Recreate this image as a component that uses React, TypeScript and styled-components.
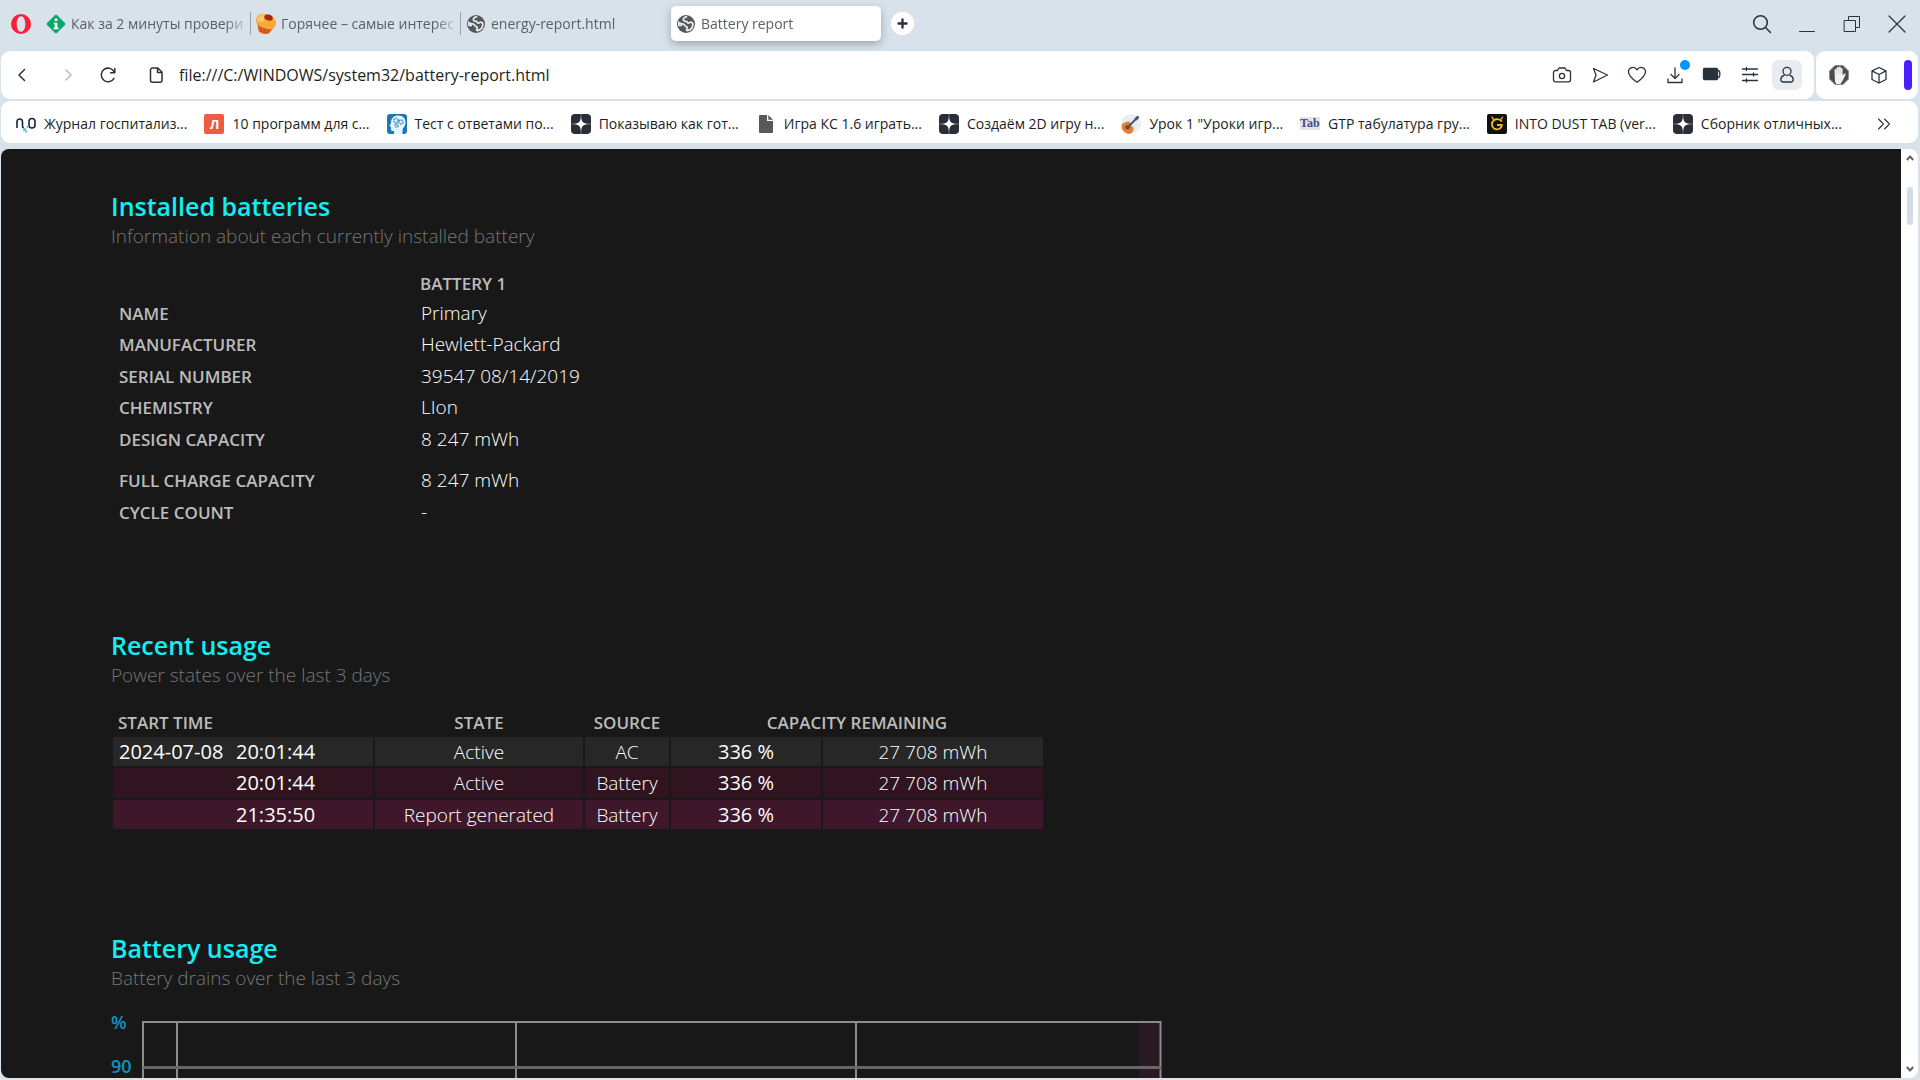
import React from "react";
import styled, { createGlobalStyle, css } from "styled-components";

const GlobalStyle = createGlobalStyle`
  * { box-sizing: border-box; }
  body {
    margin: 0;
    background: #d8e2ea;
    font-family: "Open Sans", "Noto Sans", sans-serif;
    overflow: hidden;
  }
  svg { display: block; flex: none; }
`;

const Window = styled.div`
  display: flex;
  flex-direction: column;
  height: 100vh;
  background: #d8e2ea;
`;

const TabBar = styled.header`
  display: flex;
  align-items: center;
  height: 51px;
  padding: 0 1px 4px 11px;
`;

const plainButton = css`
  border: 0;
  padding: 0;
  background: none;
  display: flex;
  align-items: center;
  justify-content: center;
  flex: none;
  font: inherit;
`;

const OperaButton = styled.button`
  ${plainButton}
  width: 20px;
  height: 20px;
  margin-right: 10px;
`;

const Tab = styled.button<{ $active?: boolean; $divided?: boolean }>`
  ${plainButton}
  justify-content: flex-start;
  position: relative;
  width: 210px;
  height: 35px;
  padding: 0 5px;
  gap: 5px;
  border-radius: 5px;
  color: #5c6063;
  font-size: 14px;
  ${(p) => p.$active && css`
    background: #fff;
    box-shadow: 0 3px 8px rgba(60, 75, 95, 0.4);
  `}
  ${(p) => p.$divided && css`
    &::after {
      content: "";
      position: absolute;
      right: 0;
      top: 6px;
      width: 1px;
      height: 23px;
      background: #9aa1a7;
    }
  `}
`;

const TabTitle = styled.span`
  flex: 1;
  text-align: left;
  line-height: 24px;
  white-space: nowrap;
  mask-image: linear-gradient(to right, #000 88%, transparent 102%);
`;

const NewTab = styled.button`
  ${plainButton}
  width: 23px;
  height: 23px;
  margin-left: 10px;
  border-radius: 50%;
  background: #fff;
`;

const WindowControls = styled.div`
  display: flex;
  margin-left: auto;
`;

const ControlButton = styled.button`
  ${plainButton}
  width: 45px;
  height: 40px;
`;

const ToolbarRow = styled.div`
  display: flex;
  gap: 2px;
  padding: 0 2px 0 1px;
  margin-bottom: 2px;
`;

const Panel = styled.div`
  display: flex;
  align-items: center;
  height: 48px;
  border-radius: 9px;
  background: #fff;
`;

const AddressPanel = styled(Panel)`
  flex: 1;
  padding: 0 12px 0 5px;
`;

const SidePanel = styled(Panel)`
  gap: 10px;
  padding: 0 6px 0 8px;
`;

const NavButton = styled.button<{ $w: number; $gap?: number }>`
  ${plainButton}
  width: ${(p) => p.$w}px;
  height: 30px;
  margin-left: ${(p) => p.$gap ?? 0}px;
`;

const Address = styled.input`
  flex: 1;
  min-width: 0;
  border: 0;
  padding: 0;
  outline: 0;
  background: none;
  color: #1c1f22;
  font: 16px/24px "Open Sans", "Noto Sans", sans-serif;
`;

const ToolGroup = styled.div`
  display: flex;
  justify-content: space-between;
  flex: none;
  width: 255px;
`;

const ToolButton = styled.button<{ $on?: boolean }>`
  ${plainButton}
  position: relative;
  width: 30px;
  height: 30px;
  border-radius: 7px;
  background: ${(p) => (p.$on ? "#e6ecf0" : "none")};
`;

const NoticeDot = styled.span`
  position: absolute;
  top: 0;
  right: 0;
  width: 10px;
  height: 10px;
  border-radius: 50%;
  background: #0095ff;
`;

const AccentBar = styled.span`
  width: 8px;
  height: 30px;
  border-radius: 4px;
  background: #4a1fff;
`;

const Bookmarks = styled.nav`
  display: flex;
  align-items: center;
  gap: 17px;
  height: 42px;
  margin: 0 2px 6px 1px;
  padding: 3px 22px 0 15px;
  border-radius: 9px;
  background: #fff;
`;

const Bookmark = styled.a`
  display: flex;
  align-items: center;
  gap: 8px;
  color: #1c1f22;
  font-size: 14px;
  line-height: 22px;
  white-space: nowrap;
  text-decoration: none;
`;

const MoreButton = styled.button`
  ${plainButton}
  width: 24px;
  height: 24px;
  margin-left: auto;
`;

const Viewport = styled.div`
  display: flex;
  flex: 1;
  min-height: 0;
  margin: 0 2px 0 1px;
  border-radius: 8px;
  overflow: hidden;
`;

const Report = styled.main`
  flex: 1;
  min-width: 0;
  overflow: hidden;
  padding: 41px 0 0 110px;
  background: #181818;
  color: #fff;
`;

const Section = styled.section`
  margin-bottom: 101px;
`;

const Heading = styled.h2`
  margin: 0;
  color: #11eef4;
  font-size: 25px;
  font-weight: 600;
  line-height: 32px;
`;

const Explanation = styled.p`
  margin: 0 0 18px;
  color: #777;
  font-size: 19px;
  font-weight: 300;
  line-height: 28px;
`;

const DataTable = styled.table`
  table-layout: fixed;
  border-collapse: separate;
  border-spacing: 2px;
  line-height: 24px;
`;

const HeadCell = styled.th<{ $align?: string }>`
  height: 26px;
  padding: 2px 5px 0;
  color: #bcbcbc;
  font-size: 17px;
  font-weight: 600;
  text-align: ${(p) => p.$align ?? "left"};
  vertical-align: baseline;
  white-space: nowrap;
`;

const Row = styled.tr<{ $tall?: boolean; $tone?: string }>`
  height: ${(p) => (p.$tall ? 39 : 29)}px;
  background: ${(p) => p.$tone ?? "none"};
  &:nth-child(even) {
    height: 30px;
  }
`;

const LabelCell = styled.th`
  padding: 3px 6px 0;
  color: #bcbcbc;
  font-size: 17px;
  font-weight: 600;
  text-align: left;
  vertical-align: baseline;
  white-space: nowrap;
`;

const Cell = styled.td<{ $center?: boolean; $strong?: boolean }>`
  padding: 3px 6px 0;
  font-size: ${(p) => (p.$strong ? 20 : 19)}px;
  font-weight: ${(p) => (p.$strong ? 400 : 300)};
  text-align: ${(p) => (p.$center ? "center" : "left")};
  vertical-align: baseline;
  white-space: nowrap;
`;

const StartTime = styled.div`
  display: grid;
  grid-template-columns: 117px auto;
`;

const ChartLabel = styled.text`
  fill: #0f93c4;
  font-size: 18px;
  font-weight: 600;
`;

const ScrollTrack = styled.div`
  display: flex;
  flex-direction: column;
  align-items: center;
  width: 17px;
  padding: 6px 0;
  border-radius: 0 8px 8px 0;
  background: #fff;
`;

const ScrollThumb = styled.div`
  width: 6px;
  height: 38px;
  margin: 26px 0 auto;
  border-radius: 3px;
  background: #d3dde6;
`;

const BottomEdge = styled.div`
  height: 2px;
  background: #e0e1e2;
`;

const Glyph = ({ w = 20, h, sw = 1.3, children }: { w?: number; h?: number; sw?: number; children: React.ReactNode }) => (
  <svg width={w} height={h ?? w} viewBox={`0 0 ${w} ${h ?? w}`} fill="none" stroke="#29333d" strokeWidth={sw} strokeLinecap="round" strokeLinejoin="round" aria-hidden="true">
    {children}
  </svg>
);

const OperaLogo = () => (
  <svg width="20" height="20" viewBox="0 0 20 20">
    <path fillRule="evenodd" fill="#fa1e3a" d="M10 0a10 10 0 1 0 0 20a10 10 0 0 0 0-20ZM10 2.2c2.600 0 4.300 3.400 4.300 7.800s-1.700 7.800-4.300 7.800s-4.300-3.400-4.300-7.800s1.700-7.800 4.300-7.800Z" />
  </svg>
);

const InfoIcon = () => (
  <svg width="20" height="20" viewBox="0 0 20 20">
    <path d="M10 2 18 10 10 18 2 10Z" fill="#08a869" stroke="#08a869" strokeWidth="2.500" strokeLinejoin="round" />
    <circle cx="10" cy="5.800" r="1.500" fill="#fff" />
    <path d="M7.800 8.800h3.600v5h1.200v1.400H7.500v-1.400h1.200v-3.600h-.9Z" fill="#fff" />
  </svg>
);

const CakeIcon = () => (
  <svg width="20" height="20" viewBox="0 0 20 20">
    <path d="M1 8 2.500 17c2.500 3 7.500 4 11 2l5-7Z" fill="#e2641f" />
    <path d="m4.500 13 1 5M8 14l.5 5M12 14.500l-.5 4.500" stroke="#c04c14" strokeWidth="1" />
    <path d="M0 6C0 1.500 4 0 9 0c6 0 11 4 11 9 0 4-3 6.500-7 6C6 14.500 0 11 0 6Z" fill="#f9a83a" />
    <path d="M.5 5.500c1-4 5-5 9-4.500L7 8C4 8.500 1.500 7.500.5 5.500Z" fill="#ffc767" />
    <ellipse cx="12.500" cy="3.600" rx="4.300" ry="2.900" fill="#a52a12" transform="rotate(18 12.500 3.600)" />
  </svg>
);

const GlobeIcon = () => (
  <svg width="20" height="20" viewBox="0 0 20 20">
    <circle cx="10" cy="10" r="9" fill="#55585a" />
    <path d="M11.200 2.600c-2.800.5-4.200 1.800-3.900 3.300.3 1.400 1.900 1.300 3.100 1.500 1 .2.800 1.600 2 1.700 1.200 0 1.300-1.100 2.600-1 1.500.2 2 1.300 1.800 2.900-.5 3-2.700 5.200-5.300 5.600-1.200.1-1.100-1.300-.5-2 .8-1.100 0-2.100-1.200-2.300-1.500-.4-1-2.300-3.300-2.400-1.300 0-2.500-.3-3.600-1.200l.1 2.600h3" fill="none" stroke="#e6ecf0" strokeWidth="1.700" />
  </svg>
);

const SparkIcon = () => (
  <svg width="20" height="20" viewBox="0 0 20 20">
    <rect width="20" height="20" rx="4" fill="#2b2e36" />
    <path d="M10 0v20M0 10h20" stroke="#858891" strokeWidth=".8" />
    <path d="M10 3c.5 4.800 2.200 6.500 7 7-4.800.5-6.500 2.200-7 7-.5-4.800-2.200-6.500-7-7 4.800-.5 6.500-2.200 7-7Z" fill="#fff" />
  </svg>
);

const JournalIcon = () => (
  <svg width="20" height="20" viewBox="0 0 20 20" fill="none">
    <path d="M1 14V8c0-4 5.500-4 5.500 0v4c0 1 .5 2 1.500 2" stroke="#17263c" strokeWidth="1.600" />
    <rect x="13" y="4.500" width="6" height="9.500" rx="3" stroke="#17263c" strokeWidth="1.600" />
    <path d="M7 14h3v3H7zM10.500 12h2v2h-2zM9 16.500h2v2H9z" fill="#5bc6f2" />
  </svg>
);

const LetterBadge = styled.span`
  display: flex;
  align-items: center;
  justify-content: center;
  width: 20px;
  height: 20px;
  flex: none;
  border-radius: 2px;
  background: #ef5b40;
  color: #fff;
  font-size: 13px;
  font-weight: 700;
`;

const TabBadge = styled.span`
  width: 20px;
  height: 13px;
  flex: none;
  background: #e2e2e8;
  color: #444b86;
  font: 700 12px/12px "Liberation Serif", serif;
`;

const HeadIcon = () => (
  <svg width="20" height="20" viewBox="0 0 20 20">
    <rect width="20" height="20" rx="3" fill="#1979b8" />
    <path d="M7 20v-3c-2 0-3 0-3-2v-2L2.500 12 4 9c0-5 3-7.500 7-7.500 5 0 7.500 3 7.500 7 0 4-3 5-3 8V20Z" fill="#e8f4fb" />
    <g fill="none" stroke="#4795c6" strokeWidth="1.600" strokeDasharray="1.500 .7">
      <circle cx="9" cy="6.500" r="2.200" />
      <circle cx="14" cy="8" r="2" />
      <circle cx="9.500" cy="11.500" r="1.600" />
    </g>
  </svg>
);

const FileIcon = () => (
  <svg width="20" height="20" viewBox="0 0 20 20">
    <path d="M4 1H11v6h6v11a1 1 0 0 1-1 1H4a1 1 0 0 1-1-1V2a1 1 0 0 1 1-1Z" fill="#58595b" />
    <path d="M12.300 1 17 5.800h-4.700Z" fill="#58595b" />
  </svg>
);

const GuitarIcon = () => (
  <svg width="20" height="20" viewBox="0 0 20 20">
    <circle cx="10" cy="10" r="10" fill="#e9eeee" />
    <path d="M1 10.500C2.500 8 4.500 9 6 7.800c2-1.300 4 .7 4 2.700s2 1.500 2.500 3.500S11.500 20 8 20C4 20-1 14.500 1 10.500Z" fill="#ee7a2c" />
    <circle cx="6.500" cy="13.200" r="2.300" fill="#46586a" />
    <path d="m6 14 10-10" stroke="#46586a" strokeWidth="2" />
    <path d="m14.500 5.500 3-3" stroke="#46586a" strokeWidth="3" />
  </svg>
);

const GIcon = () => (
  <svg width="20" height="20" viewBox="0 0 20 20" fill="none">
    <rect width="20" height="20" rx="2" fill="#101010" />
    <path d="M15 7.500C13 5.200 9.500 4.500 7 6.200c-2.800 2-2.800 6.200 0 8.200 3 2 7.500.7 7.800-3.400H10" stroke="#f1bf13" strokeWidth="1.800" />
    <path d="M5 2.500c0 1.500.8 2.700 2.500 3.200M15.500 2.500c0 1.500-.8 2.500-2 3" stroke="#f1bf13" strokeWidth="1.200" />
  </svg>
);

const HandIcon = () => (
  <svg width="20" height="20" viewBox="0 0 20 20">
    <path d="M6 .5h8L19.500 6v8L14 19.500H6L.5 14V6Z" fill="#4b4b4b" stroke="#8d8d8d" />
    <path d="M6 17 5.500 5c0-1.300 1.800-1.300 1.900 0L7.600 3c0-1.300 1.900-1.300 2 0l.2-.7c.2-1.200 2-1.100 2 .2l.1 1.200c.2-1 1.700-.9 1.700.3v6.500l1.400-1.700c.9-.9 2 0 1.500 1L13.500 16 11.500 19H7.500Z" fill="#f1f1f1" />
    <path d="M7.600 4.500V9M9.800 3v6M11.900 3.500V9" stroke="#bbb" strokeWidth=".5" />
  </svg>
);

const bookmarks: { icon: React.ReactNode; title: string }[] = [
  { icon: <JournalIcon />, title: "Журнал госпитализ..." },
  { icon: <LetterBadge>Л</LetterBadge>, title: "10 программ для с..." },
  { icon: <HeadIcon />, title: "Тест с ответами по..." },
  { icon: <SparkIcon />, title: "Показываю как гот..." },
  { icon: <FileIcon />, title: "Игра КС 1.6 играть..." },
  { icon: <SparkIcon />, title: "Создаём 2D игру н..." },
  { icon: <GuitarIcon />, title: 'Урок 1 "Уроки игр...' },
  { icon: <TabBadge>Tab</TabBadge>, title: "GTP табулатура гру..." },
  { icon: <GIcon />, title: "INTO DUST TAB (ver..." },
  { icon: <SparkIcon />, title: "Сборник отличных..." },
];

const batteryInfo: { label: string; value: string; tall?: boolean }[] = [
  { label: "NAME", value: "Primary" },
  { label: "MANUFACTURER", value: "Hewlett-Packard" },
  { label: "SERIAL NUMBER", value: "39547 08/14/2019" },
  { label: "CHEMISTRY", value: "LIon" },
  { label: "DESIGN CAPACITY", value: "8 247 mWh", tall: true },
  { label: "FULL CHARGE CAPACITY", value: "8 247 mWh" },
  { label: "CYCLE COUNT", value: "-" },
];

const usage = [
  { date: "2024-07-08", time: "20:01:44", state: "Active", source: "AC", tone: "#272727" },
  { date: "\u00a0", time: "20:01:44", state: "Active", source: "Battery", tone: "#30141f" },
  { date: "\u00a0", time: "21:35:50", state: "Report generated", source: "Battery", tone: "#3e172b" },
];

export default function App() {
  return (
    <Window>
      <GlobalStyle />
      <TabBar>
        <OperaButton aria-label="Opera"><OperaLogo /></OperaButton>
        <Tab $divided><InfoIcon /><TabTitle>Как за 2 минуты провери</TabTitle></Tab>
        <Tab $divided><CakeIcon /><TabTitle>Горячее – самые интерес</TabTitle></Tab>
        <Tab><GlobeIcon /><TabTitle>energy-report.html</TabTitle></Tab>
        <Tab $active><GlobeIcon /><TabTitle>Battery report</TabTitle></Tab>
        <NewTab aria-label="New tab"><Glyph w={11} sw={2.4}><path d="M5.500 1.500v8M1.500 5.500h8" /></Glyph></NewTab>
        <WindowControls>
          <ControlButton aria-label="Search tabs">
            <Glyph w={20} sw={1.6}><circle cx="8.500" cy="8.500" r="6.800" /><path d="m13.500 13.500 5 5" /></Glyph>
          </ControlButton>
          <ControlButton aria-label="Minimize"><Glyph w={18} sw={1}><path d="M1.500 16.500h15" /></Glyph></ControlButton>
          <ControlButton aria-label="Restore">
            <Glyph w={18} sw={1}><path d="M1.500 5.500h11v11h-11zM5.500 5.500v-4h11v11h-4" /></Glyph>
          </ControlButton>
          <ControlButton aria-label="Close"><Glyph w={18} sw={1.200}><path d="m1 1 16 16M17 1 1 17" /></Glyph></ControlButton>
        </WindowControls>
      </TabBar>

      <ToolbarRow>
        <AddressPanel>
          <NavButton $w={31} aria-label="Back"><Glyph w={16} sw={1.5}><path d="M10.500 2.500 5 8l5.500 5.500" /></Glyph></NavButton>
          <NavButton $w={62} aria-label="Forward" disabled>
            <svg width="16" height="16" viewBox="0 0 16 16" fill="none" stroke="#b9bfc4" strokeWidth="1.500"><path d="M5.500 2.500 11 8l-5.500 5.500" /></svg>
          </NavButton>
          <NavButton $w={18} aria-label="Reload">
            <Glyph w={18} sw={1.5}><path d="M15 12.300A6.800 6.800 0 1 1 15.300 6.200M15.800 2.500v4.200h-4.200" /></Glyph>
          </NavButton>
          <NavButton $w={46} $gap={16} aria-label="Page information">
            <Glyph w={18} sw={1.5}><path d="M5.500 2h5.300L15 6v8.300a2 2 0 0 1-2 2H5.500a2 2 0 0 1-2-2V4a2 2 0 0 1 2-2ZM10.500 2v4.500H15" /></Glyph>
          </NavButton>
          <Address aria-label="Address" defaultValue="file:///C:/WINDOWS/system32/battery-report.html" />
          <ToolGroup>
            <ToolButton aria-label="Snapshot">
              <Glyph><path d="M1.500 7.500a2 2 0 0 1 2-2h2L7 3h6l1.500 2.500h2a2 2 0 0 1 2 2v7.300a2 2 0 0 1-2 2h-13a2 2 0 0 1-2-2Z" /><circle cx="10" cy="11" r="2.600" /></Glyph>
            </ToolButton>
            <ToolButton aria-label="Send">
              <Glyph><path d="M3.500 3.500 17.500 10 3.500 17 6 10Z" /></Glyph>
            </ToolButton>
            <ToolButton aria-label="Favorite">
              <Glyph><path d="M10 17.300C6 14.500 1.500 11 1.500 6.800c0-4.800 6.300-6 8.500-1.900 2.200-4.100 8.500-2.900 8.500 1.900 0 4.200-4.500 7.700-8.500 10.500Z" /></Glyph>
            </ToolButton>
            <ToolButton aria-label="Downloads">
              <Glyph><path d="M10 3v10M6 9.500l4 4 4-4M3 14v3.500h14V14" /></Glyph>
              <NoticeDot />
            </ToolButton>
            <ToolButton aria-label="Battery saver">
              <Glyph><rect x="1.500" y="3.500" width="14" height="11" rx="1" fill="#29333d" /><path d="M16 5.500c2.500 0 2.500 7 0 7" /></Glyph>
            </ToolButton>
            <ToolButton aria-label="Easy setup">
              <Glyph><path d="M2.500 4h15M2.500 9.500h15M2.500 15.500h15M6.500 2.500v3M13.500 8v3M6.500 14v3" /></Glyph>
            </ToolButton>
            <ToolButton $on aria-label="Profile">
              <Glyph><circle cx="10" cy="6.300" r="4" /><path d="M7 10.300c-2 .7-3.200 2.200-3.200 4.200 0 1.800 1 2.500 2.500 2.500h7.400c1.500 0 2.500-.7 2.500-2.500 0-2-1.200-3.500-3.200-4.200" /></Glyph>
            </ToolButton>
          </ToolGroup>
        </AddressPanel>
        <SidePanel>
          <ToolButton aria-label="Ad blocker"><HandIcon /></ToolButton>
          <ToolButton aria-label="Extensions">
            <Glyph><path d="m10 2.500 7 3.400v8.600l-7 3.500-7-3.500V5.900ZM3 5.900l7 3.600 7-3.600M10 9.500V18" /></Glyph>
          </ToolButton>
          <AccentBar />
        </SidePanel>
      </ToolbarRow>

      <Bookmarks aria-label="Bookmarks">
        {bookmarks.map((b) => (
          <Bookmark href="#" key={b.title}>{b.icon}<span>{b.title}</span></Bookmark>
        ))}
        <MoreButton aria-label="More bookmarks">
          <Glyph w={14} sw={1.100}><path d="m1.500 2 5 5-5 5M7.500 2l5 5-5 5" /></Glyph>
        </MoreButton>
      </Bookmarks>

      <Viewport>
        <Report>
          <Section>
            <Heading>Installed batteries</Heading>
            <Explanation>Information about each currently installed battery</Explanation>
            <DataTable>
              <colgroup><col width="300" /><col width="220" /></colgroup>
              <thead>
                <tr><td /><HeadCell scope="col">BATTERY 1</HeadCell></tr>
              </thead>
              <tbody>
                {batteryInfo.map((r) => (
                  <Row key={r.label} $tall={r.tall}>
                    <LabelCell scope="row">{r.label}</LabelCell>
                    <Cell>{r.value}</Cell>
                  </Row>
                ))}
              </tbody>
            </DataTable>
          </Section>

          <Section>
            <Heading>Recent usage</Heading>
            <Explanation>Power states over the last 3 days</Explanation>
            <DataTable>
              <colgroup><col width="260" /><col width="208" /><col width="84" /><col width="150" /><col width="220" /></colgroup>
              <thead>
                <tr>
                  <HeadCell scope="col">START TIME</HeadCell>
                  <HeadCell scope="col" $align="center">STATE</HeadCell>
                  <HeadCell scope="col" $align="center">SOURCE</HeadCell>
                  <HeadCell scope="colgroup" colSpan={2} $align="center">CAPACITY REMAINING</HeadCell>
                </tr>
              </thead>
              <tbody>
                {usage.map((r) => (
                  <Row key={r.time + r.source} $tone={r.tone}>
                    <Cell $strong><StartTime><span>{r.date}</span><span>{r.time}</span></StartTime></Cell>
                    <Cell $center>{r.state}</Cell>
                    <Cell $center>{r.source}</Cell>
                    <Cell $center $strong>336 %</Cell>
                    <Cell $center>27 708 mWh</Cell>
                  </Row>
                ))}
              </tbody>
            </DataTable>
          </Section>

          <Section>
            <Heading>Battery usage</Heading>
            <Explanation>Battery drains over the last 3 days</Explanation>
            <svg width="1060" height="68" viewBox="0 0 1060 68" role="img" aria-label="Battery usage chart">
              <rect x="1028" y="11" width="21" height="57" fill="#291a21" />
              <g stroke="#8c8c8c" strokeWidth="2">
                <path d="M31 12h1019M32 11v57M66 11v57M405 11v57M745 11v57M1049.500 11v57" />
                <path d="M32 57.500h1018" stroke="#666" strokeWidth="3" />
              </g>
              <ChartLabel x="0" y="19">%</ChartLabel>
              <ChartLabel x="0" y="63">90</ChartLabel>
            </svg>
          </Section>
        </Report>
        <ScrollTrack aria-hidden="true">
          <svg width="8" height="6" viewBox="0 0 8 6" fill="none" stroke="#5f6368" strokeWidth="2"><path d="m.8 5 3.200-3.500L7.200 5" /></svg>
          <ScrollThumb />
          <svg width="8" height="6" viewBox="0 0 8 6" fill="none" stroke="#5f6368" strokeWidth="2"><path d="m.8 1 3.200 3.500L7.200 1" /></svg>
        </ScrollTrack>
      </Viewport>
      <BottomEdge />
    </Window>
  );
}
